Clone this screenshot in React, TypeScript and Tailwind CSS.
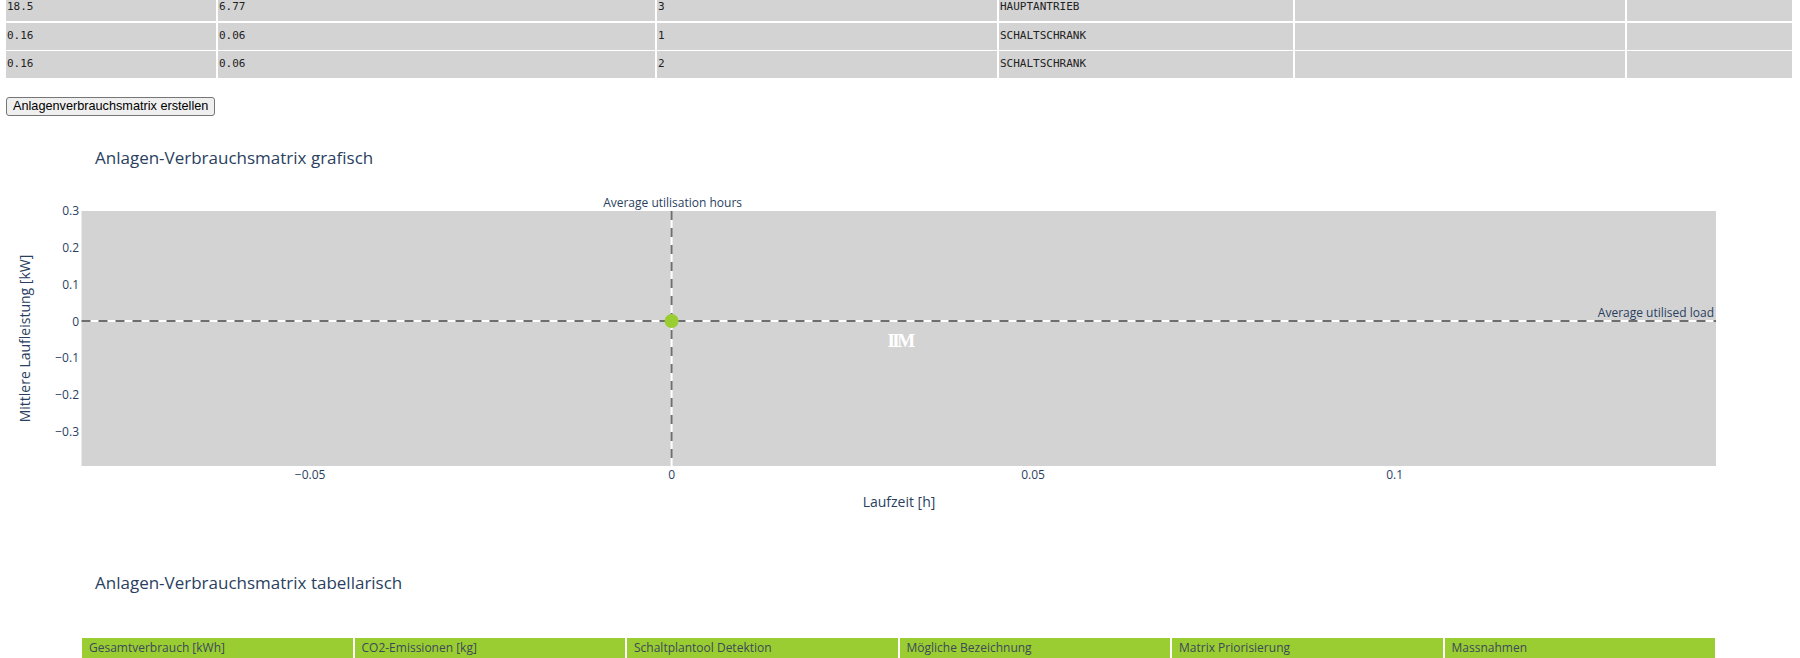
const rows = [
  ["18.5", "6.77", "3", "HAUPTANTRIEB", "", ""],
  ["0.16", "0.06", "1", "SCHALTSCHRANK", "", ""],
  ["0.16", "0.06", "2", "SCHALTSCHRANK", "", ""],
];

const headers = [
  "Gesamtverbrauch [kWh]",
  "CO2-Emissionen [kg]",
  "Schaltplantool Detektion",
  "Mögliche Bezeichnung",
  "Matrix Priorisierung",
  "Massnahmen",
];

// plot geometry (svg coordinates)
const PL = 81.5;
const PR = 1716;
const PT = 41;
const PB = 296;
const X0 = 671.6;
const Y0 = 151;
const xs = (v: number) => X0 + v * 7230;
const ys = (v: number) => Y0 - v * 366.7;

const yTicks = [
  { v: 0.3, t: "0.3" },
  { v: 0.2, t: "0.2" },
  { v: 0.1, t: "0.1" },
  { v: 0, t: "0" },
  { v: -0.1, t: "−0.1" },
  { v: -0.2, t: "−0.2" },
  { v: -0.3, t: "−0.3" },
];

const xTicks = [
  { v: -0.05, t: "−0.05" },
  { v: 0, t: "0" },
  { v: 0.05, t: "0.05" },
  { v: 0.1, t: "0.1" },
];

const MatrixChart = () => {
  const font = "'Open Sans', sans-serif";
  return (
    <svg width={1800} height={350} className="block">
      <rect x={PL} y={PT} width={PR - PL} height={PB - PT} fill="#d3d3d3" />
      {/* zero lines */}
      <line x1={PL} x2={PR} y1={Y0} y2={Y0} stroke="#fff" strokeWidth={2} />
      <line x1={X0} x2={X0} y1={PT} y2={PB} stroke="#fff" strokeWidth={2} />
      {/* average lines */}
      <line x1={PL} x2={PR} y1={Y0} y2={Y0} stroke="#6e6e6e" strokeWidth={2} strokeDasharray="9,8" />
      <line x1={X0} x2={X0} y1={PT} y2={PB} stroke="#6e6e6e" strokeWidth={2} strokeDasharray="9,8" />
      <circle cx={X0} cy={Y0} r={7} fill="#9acd32" />
      <text
        x={900}
        y={170}
        fill="#fff"
        fontFamily="'Liberation Serif', serif"
        fontWeight={700}
        fontSize={19}
        letterSpacing={-2.5}
        textAnchor="middle"
        dominantBaseline="central"
      >
        IIM
      </text>

      <g fontFamily={font} fontSize={12} fill="#2a3f5f">
        {yTicks.map((k) => (
          <text key={k.t} x={79} y={ys(k.v)} textAnchor="end" dominantBaseline="central">
            {k.t}
          </text>
        ))}
        {xTicks.map((k) => (
          <text key={k.t} x={xs(k.v)} y={304} textAnchor="middle" dominantBaseline="central">
            {k.t}
          </text>
        ))}
        <text x={X0 + 1} y={32} textAnchor="middle" dominantBaseline="central">
          Average utilisation hours
        </text>
        <text x={1714} y={142} textAnchor="end" dominantBaseline="central">
          Average utilised load
        </text>
      </g>

      <g fontFamily={font} fontSize={14} fill="#2a3f5f">
        <text x={899} y={331} textAnchor="middle" dominantBaseline="central">
          Laufzeit [h]
        </text>
        <text
          x={24}
          y={168.5}
          textAnchor="middle"
          dominantBaseline="central"
          transform="rotate(-90 24 168.5)"
        >
          Mittlere Laufleistung [kW]
        </text>
      </g>
    </svg>
  );
};

export default function App() {
  return (
    <div className="h-[658px] w-[1800px] overflow-hidden bg-white">
      <div className="-mt-[6px] grid grid-cols-[210px_437px_340px_294px_330px_165px] gap-x-[2px] gap-y-[1.5px] pl-[6px] font-['DejaVu_Sans_Mono',monospace] text-[11px] text-[#222]">
        {rows.map((r, i) =>
          r.map((c, j) => (
            <div key={`${i}-${j}`} className="flex h-[27px] items-center bg-[#d3d3d3] pl-[1px]">
              {c}
            </div>
          ))
        )}
      </div>

      <div className="mt-[19px] flex pl-[6px]">
        <button className="flex h-[19px] items-center rounded-[3px] border border-[#767676] bg-[#efefef] px-[6px] font-['Liberation_Sans',Arial,sans-serif] text-[12.7px] leading-none text-black">
          Anlagenverbrauchsmatrix erstellen
        </button>
      </div>

      <h2 className="mt-[30px] h-[24px] pl-[95px] font-['Open_Sans',sans-serif] text-[17px] leading-[24px] text-[#2a3f5f]">
        Anlagen-Verbrauchsmatrix grafisch
      </h2>
      <MatrixChart />

      <h2 className="mt-[51px] h-[24px] pl-[95px] font-['Open_Sans',sans-serif] text-[17px] leading-[24px] text-[#2a3f5f]">
        Anlagen-Verbrauchsmatrix tabellarisch
      </h2>
      <div className="ml-[81px] mt-[42px] grid w-[1635px] grid-cols-6 font-['Open_Sans',sans-serif] text-[12px] text-[#3b4a5a]">
        {headers.map((h) => (
          <div key={h} className="h-[28px] border border-white bg-[#9acd32] pl-[7px] pt-[2px] leading-[16px]">
            {h}
          </div>
        ))}
      </div>
    </div>
  );
}
